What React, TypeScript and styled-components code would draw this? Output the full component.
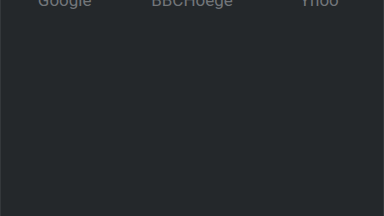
import styled, { createGlobalStyle } from 'styled-components';

const GlobalStyle = createGlobalStyle`
  html, body {
    margin: 0;
    padding: 0;
    background: #24282b;
    overflow: hidden;
  }
`;

const sites = [
  { name: 'Google' },
  { name: 'BBCHoege' },
  { name: 'Yhoo' },
];

export default function App() {
  return (
    <>
      <GlobalStyle />
      <Screen>
        <ShortcutGrid>
          {sites.map((s) => (
            <Shortcut key={s.name}>
              <Label>{s.name}</Label>
            </Shortcut>
          ))}
        </ShortcutGrid>
      </Screen>
    </>
  );
}

const Screen = styled.div`
  width: 384px;
  height: 216px;
  box-sizing: border-box;
  background: #24282b;
  border-left: 1px solid #34383b;
  border-right: 1px solid #34383b;
  overflow: hidden;
`;

const ShortcutGrid = styled.div`
  display: grid;
  grid-template-columns: repeat(3, 1fr);
  margin-top: -11px; // the row is scrolled up, labels cut at the top
`;

const Shortcut = styled.div`
  display: flex;
  justify-content: center;
`;

const Label = styled.span`
  font-family: Roboto, 'Noto Sans', sans-serif;
  font-size: 17px;
  line-height: 22px;
  color: #72767a;
`;
